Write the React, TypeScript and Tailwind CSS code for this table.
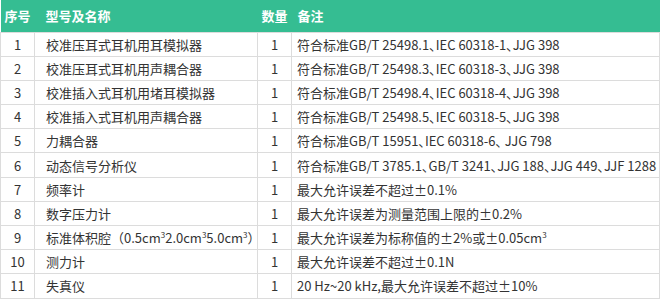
import React from "react";

interface Row {
  no: number;
  name: React.ReactNode;
  qty: number;
  note: React.ReactNode;
}

// 、 shown narrow as in the reference
const Std = ({ text }: { text: string }) => {
  const parts = text.split("、");
  return (
    <>
      {parts.map((p, i) => (
        <React.Fragment key={i}>
          {i > 0 && <span className="[font-feature-settings:'palt']">、</span>}
          {p}
        </React.Fragment>
      ))}
    </>
  );
};

const Sup = () => <sup className="text-[8px] -top-[5px]">3</sup>;

const rows: Row[] = [
  { no: 1, name: "校准压耳式耳机用耳模拟器", qty: 1, note: <Std text="符合标准GB/T 25498.1、IEC 60318-1、JJG 398" /> },
  { no: 2, name: "校准压耳式耳机用声耦合器", qty: 1, note: <Std text="符合标准GB/T 25498.3、IEC 60318-3、JJG 398" /> },
  { no: 3, name: "校准插入式耳机用堵耳模拟器", qty: 1, note: <Std text="符合标准GB/T 25498.4、IEC 60318-4、JJG 398" /> },
  { no: 4, name: "校准插入式耳机用声耦合器", qty: 1, note: <Std text="符合标准GB/T 25498.5、IEC 60318-5、JJG 398" /> },
  { no: 5, name: "力耦合器", qty: 1, note: <Std text="符合标准GB/T 15951、IEC 60318-6、 JJG 798" /> },
  { no: 6, name: "动态信号分析仪", qty: 1, note: <Std text="符合标准GB/T 3785.1、GB/T 3241、JJG 188、JJG 449、JJF 1288" /> },
  { no: 7, name: "频率计", qty: 1, note: "最大允许误差不超过±0.1%" },
  { no: 8, name: "数字压力计", qty: 1, note: "最大允许误差为测量范围上限的±0.2%" },
  {
    no: 9,
    name: (
      <>
        标准体积腔（0.5cm<Sup />2.0cm<Sup />5.0cm<Sup />）
      </>
    ),
    qty: 1,
    note: (
      <>
        最大允许误差为标称值的±2%或±0.05cm<Sup />
      </>
    ),
  },
  { no: 10, name: "测力计", qty: 1, note: "最大允许误差不超过±0.1N" },
  { no: 11, name: "失真仪", qty: 1, note: "20 Hz~20 kHz,最大允许误差不超过±10%" },
];

export default function App() {
  return (
    <div
      className="w-[660px] h-[299px] bg-white overflow-hidden"
      style={{ fontFamily: '"Noto Sans CJK SC", "Noto Sans", sans-serif' }}
    >
      <table className="w-[660px] table-fixed border-collapse text-[13px] text-[#333]">
        <colgroup>
          <col className="w-[34px]" />
          <col className="w-[223px]" />
          <col className="w-[34px]" />
          <col />
        </colgroup>
        <thead>
          <tr className="h-[32px] bg-[#35bd92] text-white font-bold">
            <th className="text-center font-bold p-0">序号</th>
            <th className="text-left font-bold pl-[11px]">型号及名称</th>
            <th className="text-center font-bold p-0">数量</th>
            <th className="text-left font-bold pl-[6px]">备注</th>
          </tr>
        </thead>
        <tbody>
          {rows.map((r) => (
            <tr key={r.no} className="h-[24.2px]">
              <td className="border border-[#dcdcdc] text-center p-0 leading-none">{r.no}</td>
              <td className="border border-[#dcdcdc] pl-[11px] p-0 leading-none whitespace-nowrap">{r.name}</td>
              <td className="border border-[#dcdcdc] text-center p-0 leading-none">{r.qty}</td>
              <td className="border border-[#dcdcdc] pl-[5px] p-0 leading-none whitespace-nowrap">{r.note}</td>
            </tr>
          ))}
        </tbody>
      </table>
    </div>
  );
}
